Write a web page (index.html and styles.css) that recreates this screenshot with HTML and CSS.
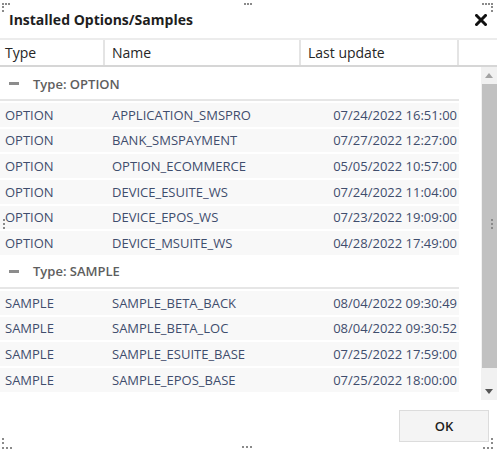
FILE: index.html
```html
<!DOCTYPE html>
<html>
<head>
<meta charset="utf-8">
<link rel="stylesheet" href="styles.css">
</head>
<body>
<div class="dialog">
  <div class="titlebar">
    <div class="title">Installed Options/Samples</div>
    <svg class="close" width="12" height="12" viewBox="0 0 12 12"><path d="M1.5 1.5 L10.5 10.5 M10.5 1.5 L1.5 10.5" stroke="#111" stroke-width="3" stroke-linecap="square"/></svg>
  </div>
  <div class="header">
    <div class="hcell c1">Type</div>
    <div class="hcell c2">Name</div>
    <div class="hcell c3">Last update</div>
    <div class="hcell c4"></div>
  </div>
  <div class="body">
    <div class="viewport">
      <div class="rows">
        <div class="group"><span class="minus"></span>Type: OPTION</div>
        <div class="row"><span class="t">OPTION</span><span class="n">APPLICATION_SMSPRO</span><span class="d">07/24/2022 16:51:00</span></div>
        <div class="row"><span class="t">OPTION</span><span class="n">BANK_SMSPAYMENT</span><span class="d">07/27/2022 12:27:00</span></div>
        <div class="row"><span class="t">OPTION</span><span class="n">OPTION_ECOMMERCE</span><span class="d">05/05/2022 10:57:00</span></div>
        <div class="row"><span class="t">OPTION</span><span class="n">DEVICE_ESUITE_WS</span><span class="d">07/24/2022 11:04:00</span></div>
        <div class="row"><span class="t">OPTION</span><span class="n">DEVICE_EPOS_WS</span><span class="d">07/23/2022 19:09:00</span></div>
        <div class="row"><span class="t">OPTION</span><span class="n">DEVICE_MSUITE_WS</span><span class="d">04/28/2022 17:49:00</span></div>
        <div class="group"><span class="minus"></span>Type: SAMPLE</div>
        <div class="row"><span class="t">SAMPLE</span><span class="n">SAMPLE_BETA_BACK</span><span class="d">08/04/2022 09:30:49</span></div>
        <div class="row"><span class="t">SAMPLE</span><span class="n">SAMPLE_BETA_LOC</span><span class="d">08/04/2022 09:30:52</span></div>
        <div class="row"><span class="t">SAMPLE</span><span class="n">SAMPLE_ESUITE_BASE</span><span class="d">07/25/2022 17:59:00</span></div>
        <div class="row"><span class="t">SAMPLE</span><span class="n">SAMPLE_EPOS_BASE</span><span class="d">07/25/2022 18:00:00</span></div>
      </div>
    </div>
    <div class="scrollbar">
      <div class="sbtn"><svg width="8" height="5" viewBox="0 0 8 5"><path d="M0 5 L4 0 L8 5 Z" fill="#a3a3a3"/></svg></div>
      <div class="thumb"></div>
      <div class="track"></div>
      <div class="sbtn down"><svg width="8" height="5" viewBox="0 0 8 5"><path d="M0 0 L4 5 L8 0 Z" fill="#555"/></svg></div>
    </div>
  </div>
  <div class="footer">
    <button class="ok">OK</button>
  </div>

  <svg class="grip g-tl" width="10" height="12" viewBox="0 0 10 12"><rect x="0" y="0" width="2" height="2"/><rect x="3" y="0" width="2" height="2"/><rect x="6" y="0" width="2" height="2"/><rect x="0" y="3" width="2" height="2"/><rect x="0" y="7" width="2" height="2"/></svg>
  <svg class="grip g-tm" width="10" height="2" viewBox="0 0 10 2"><rect x="0" y="0" width="2" height="2"/><rect x="3" y="0" width="2" height="2"/><rect x="6" y="0" width="2" height="2"/></svg>
  <svg class="grip g-tr" width="12" height="12" viewBox="0 0 12 12"><rect x="0" y="0" width="2" height="2"/><rect x="3" y="0" width="2" height="2"/><rect x="6" y="0" width="2" height="2"/><rect x="9" y="0" width="2" height="2"/><rect x="9" y="3" width="2" height="2"/><rect x="9" y="7" width="2" height="2"/></svg>
  <svg class="grip g-lm" width="3" height="12" viewBox="0 0 3 12"><rect x="0" y="0" width="2" height="2"/><rect x="0" y="4" width="2" height="2"/><rect x="0" y="8" width="2" height="2"/></svg>
  <svg class="grip g-rm" width="3" height="12" viewBox="0 0 3 12"><rect x="0" y="0" width="2" height="2"/><rect x="0" y="4" width="2" height="2"/><rect x="0" y="8" width="2" height="2"/></svg>
  <svg class="grip g-bl" width="12" height="13" viewBox="0 0 12 13"><rect x="0" y="0" width="2" height="2"/><rect x="0" y="4" width="2" height="2"/><rect x="0" y="9" width="2" height="2"/><rect x="4" y="9" width="2" height="2"/><rect x="8" y="9" width="2" height="2"/></svg>
  <svg class="grip g-bm" width="12" height="2" viewBox="0 0 12 2"><rect x="0" y="0" width="2" height="2"/><rect x="4" y="0" width="2" height="2"/><rect x="8" y="0" width="2" height="2"/></svg>
  <svg class="grip g-br" width="14" height="13" viewBox="0 0 14 13"><rect x="11" y="0" width="2" height="2"/><rect x="11" y="4" width="2" height="2"/><rect x="3" y="9" width="2" height="2"/><rect x="7" y="9" width="2" height="2"/><rect x="11" y="9" width="2" height="2"/></svg>
</div>
</body>
</html>
```

FILE: styles.css
```css
html, body {
  margin: 0;
  padding: 0;
  background: #ffffff;
}
body {
  font-family: "Open Sans", "Liberation Sans", sans-serif;
  width: 497px;
  height: 453px;
  overflow: hidden;
}
.dialog {
  position: relative;
  width: 497px;
  height: 453px;
  display: flex;
  flex-direction: column;
  background: #fff;
}
.titlebar {
  height: 38px;
  display: flex;
  align-items: center;
  justify-content: space-between;
  padding: 0 10px 0 9px;
  box-sizing: border-box;
}
.title {
  font-size: 14px;
  font-weight: 700;
  color: #1e1e1e;
  padding-top: 1px;
}
.close {
  display: block;
  margin-top: 1px;
}
.header {
  display: grid;
  grid-template-columns: 105px 196px 158px 38px;
  border-top: 2px solid #ececec;
  border-bottom: 2px solid #d6d6d6;
  height: 29px;
  box-sizing: border-box;
}
.hcell {
  font-size: 14px;
  color: #262626;
  line-height: 25px;
  border-right: 2px solid #e4e4e4;
}
.hcell.c1 { padding-left: 5px; }
.hcell.c2 { padding-left: 7px; }
.hcell.c3 { padding-left: 7px; }
.hcell.c4 { border-right: none; }
.body {
  display: flex;
  height: 333px;
}
.viewport {
  flex: 1;
  overflow: hidden;
}
.rows {
  width: 459px;
}
.group {
  height: 34px;
  box-sizing: border-box;
  border-bottom: 2px solid #e6e6e6;
  display: flex;
  align-items: center;
  padding-top: 1px;
  font-size: 13px;
  font-weight: 600;
  color: #5e5e5e;
}
.minus {
  width: 10px;
  height: 3px;
  background: #8c8c8c;
  margin: 0 14px 0 9px;
}
.row {
  height: 25.67px;
  box-sizing: border-box;
  border-top: 2px solid #ffffff;
  background: #f8f8f8;
  display: grid;
  grid-template-columns: 105px 196px 158px;
  align-items: center;
  font-size: 13px;
  color: #3f4d6d;
}
.row .t { padding-left: 5px; }
.row .n { padding-left: 7px; }
.row .d { text-align: right; padding-right: 2px; }
.scrollbar {
  width: 16px;
  display: flex;
  flex-direction: column;
  background: #f1f1f1;
}
.sbtn {
  height: 17px;
  display: flex;
  align-items: center;
  justify-content: center;
}
.thumb {
  height: 284px;
  background: #c1c1c1;
  margin-left: 1px;
}
.track {
  flex: 1;
}
.footer {
  flex: 1;
  display: flex;
  justify-content: flex-end;
  align-items: flex-start;
  padding: 10px 8px 0 0;
}
.ok {
  width: 90px;
  height: 32px;
  background: #f4f4f4;
  border: 1px solid #dcdcdc;
  font-family: "Open Sans", "Liberation Sans", sans-serif;
  font-size: 13px;
  font-weight: 600;
  color: #1e1e1e;
  padding: 0;
}
.grip {
  position: absolute;
  fill: #8a8a8a;
}
.g-tl { left: 2px; top: 3px; }
.g-tm { left: 244px; top: 3px; }
.g-tr { left: 482px; top: 3px; }
.g-lm { left: 3px; top: 219px; }
.g-rm { left: 491px; top: 219px; }
.g-bl { left: 2px; top: 438px; }
.g-bm { left: 242px; top: 446px; }
.g-br { left: 480px; top: 438px; }
```
